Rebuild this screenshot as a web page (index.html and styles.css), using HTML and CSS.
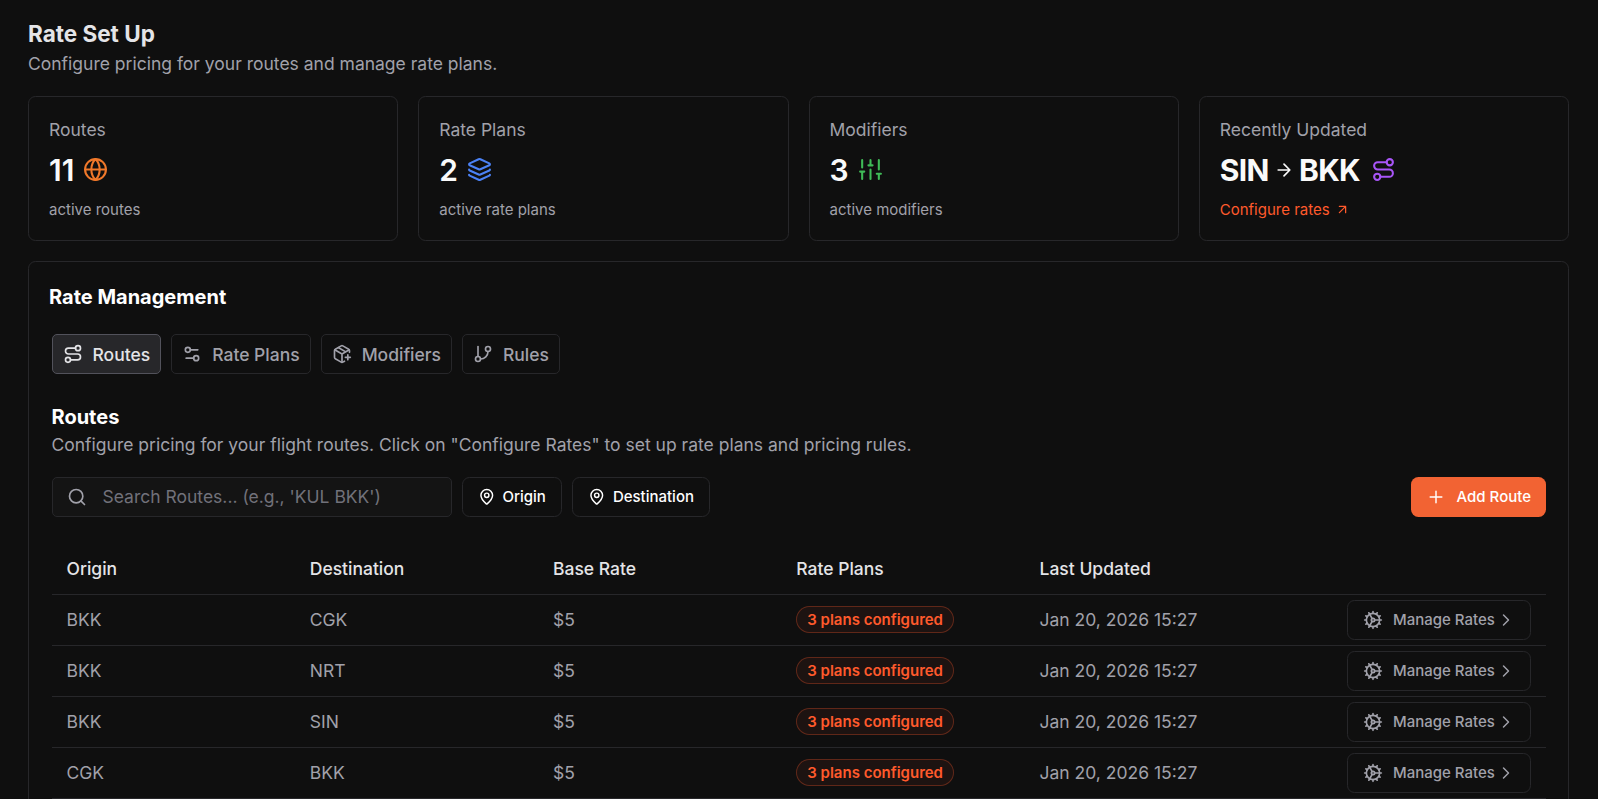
FILE: index.html
```html
<!doctype html>
<html lang="en">
<head>
	<meta charset="utf-8" />
	<title>Rate Set Up</title>
	<link rel="stylesheet" href="styles.css">
</head>
<body>
	<!-- shared icons -->
	<svg class="sprite" aria-hidden="true">
		<symbol id="i-route" viewBox="0 0 24 24"><circle cx="6" cy="19" r="3"/><path d="M9 19h8.5a3.5 3.5 0 0 0 0-7h-11a3.5 3.5 0 0 1 0-7H15"/><circle cx="18" cy="5" r="3"/></symbol>
		<symbol id="i-pin" viewBox="0 0 24 24"><path d="M20 10c0 4.993-5.539 10.193-7.399 11.799a1 1 0 0 1-1.202 0C9.539 20.193 4 14.993 4 10a8 8 0 0 1 16 0"/><circle cx="12" cy="10" r="3"/></symbol>
		<symbol id="i-cog" viewBox="0 0 24 24"><path d="M12 20a8 8 0 1 0 0-16 8 8 0 0 0 0 16Z"/><path d="M12 14a2 2 0 1 0 0-4 2 2 0 0 0 0 4Z"/><path d="M12 2v2M12 22v-2M17 20.66l-1-1.73M11 10.27 7 3.34M20.66 17l-1.73-1M3.34 7l1.73 1M14 12h8M2 12h2M20.66 7l-1.73 1M3.34 17l1.73-1M17 3.34l-1 1.73M11 13.73l-4 6.93"/></symbol>
		<symbol id="i-chevron" viewBox="0 0 24 24"><path d="m9 18 6-6-6-6"/></symbol>
	</svg>

	<main class="page">
		<h1>Rate Set Up</h1>
		<p class="lead">Configure pricing for your routes and manage rate plans.</p>

		<section class="stats">
			<div class="stat">
				<div class="stat-label">Routes</div>
				<div class="stat-value">11
					<svg class="icon orange" viewBox="0 0 24 24"><circle cx="12" cy="12" r="10"/><path d="M12 2a14.5 14.5 0 0 0 0 20 14.5 14.5 0 0 0 0-20M2 12h20"/></svg>
				</div>
				<div class="stat-note">active routes</div>
			</div>
			<div class="stat">
				<div class="stat-label">Rate Plans</div>
				<div class="stat-value">2
					<svg class="icon blue" viewBox="0 0 24 24"><path d="M12.83 2.18a2 2 0 0 0-1.66 0L2.6 6.08a1 1 0 0 0 0 1.83l8.58 3.91a2 2 0 0 0 1.66 0l8.58-3.9a1 1 0 0 0 0-1.83z"/><path d="M2 12a1 1 0 0 0 .58.91l8.6 3.91a2 2 0 0 0 1.65 0l8.58-3.9A1 1 0 0 0 22 12"/><path d="M2 17a1 1 0 0 0 .58.91l8.6 3.91a2 2 0 0 0 1.65 0l8.58-3.9A1 1 0 0 0 22 17"/></svg>
				</div>
				<div class="stat-note">active rate plans</div>
			</div>
			<div class="stat">
				<div class="stat-label">Modifiers</div>
				<div class="stat-value">3
					<svg class="icon green" viewBox="0 0 24 24"><path d="M4 21v-7M4 10V3M12 21v-9M12 8V3M20 21v-5M20 12V3M2 14h4M10 8h4M18 16h4"/></svg>
				</div>
				<div class="stat-note">active modifiers</div>
			</div>
			<div class="stat">
				<div class="stat-label">Recently Updated</div>
				<div class="stat-value pair">
					<span>SIN</span>
					<svg class="icon arrow" viewBox="0 0 24 24"><path d="M5 12h14M12 5l7 7-7 7"/></svg>
					<span>BKK</span>
					<svg class="icon purple" viewBox="0 0 24 24"><use href="#i-route"/></svg>
				</div>
				<a class="stat-note link">Configure rates
					<svg class="icon" viewBox="0 0 24 24"><path d="M7 7h10v10M7 17 17 7"/></svg>
				</a>
			</div>
		</section>

		<section class="panel">
			<h2>Rate Management</h2>
			<div class="panel-body">
				<nav class="tabs">
					<a class="tab active"><svg class="icon"><use href="#i-route"/></svg>Routes</a>
					<a class="tab"><svg class="icon" viewBox="0 0 24 24"><path d="M14 17H5M19 7h-9"/><circle cx="17" cy="17" r="3"/><circle cx="7" cy="7" r="3"/></svg>Rate Plans</a>
					<a class="tab"><svg class="icon" viewBox="0 0 24 24"><path d="M16 16h6M19 13v6"/><path d="M21 10V8a2 2 0 0 0-1-1.73l-7-4a2 2 0 0 0-2 0l-7 4A2 2 0 0 0 3 8v8a2 2 0 0 0 1 1.73l7 4a2 2 0 0 0 2 0l2-1.14"/><path d="m7.5 4.27 9 5.15M3.29 7 12 12l8.71-5M12 22V12"/></svg>Modifiers</a>
					<a class="tab"><svg class="icon" viewBox="0 0 24 24"><path d="M6 3v12"/><circle cx="18" cy="6" r="3"/><circle cx="6" cy="18" r="3"/><path d="M18 9a9 9 0 0 1-9 9"/></svg>Rules</a>
				</nav>

				<h3>Routes</h3>
				<p class="lead">Configure pricing for your flight routes. Click on "Configure Rates" to set up rate plans and pricing rules.</p>

				<div class="toolbar">
					<label class="search">
						<svg class="icon" viewBox="0 0 24 24"><path d="m21 21-4.34-4.34"/><circle cx="11" cy="11" r="8"/></svg>
						<input type="text" placeholder="Search Routes... (e.g., 'KUL BKK')" />
					</label>
					<button class="btn"><svg class="icon"><use href="#i-pin"/></svg>Origin</button>
					<button class="btn"><svg class="icon"><use href="#i-pin"/></svg>Destination</button>
					<button class="btn primary"><svg class="icon" viewBox="0 0 24 24"><path d="M5 12h14M12 5v14"/></svg>Add Route</button>
				</div>

				<table id="routes-table">
					<thead>
						<tr>
							<th>Origin</th>
							<th>Destination</th>
							<th>Base Rate</th>
							<th>Rate Plans</th>
							<th>Last Updated</th>
							<th class="actions"></th>
						</tr>
					</thead>
					<tbody>
						<tr>
							<td>BKK</td>
							<td>CGK</td>
							<td>$5</td>
							<td><span class="badge">3 plans configured</span></td>
							<td>Jan 20, 2026 15:27</td>
							<td class="actions"><button class="btn manage"><svg class="icon"><use href="#i-cog"/></svg>Manage Rates<svg class="icon chevron"><use href="#i-chevron"/></svg></button></td>
						</tr>
						<tr>
							<td>BKK</td>
							<td>NRT</td>
							<td>$5</td>
							<td><span class="badge">3 plans configured</span></td>
							<td>Jan 20, 2026 15:27</td>
							<td class="actions"><button class="btn manage"><svg class="icon"><use href="#i-cog"/></svg>Manage Rates<svg class="icon chevron"><use href="#i-chevron"/></svg></button></td>
						</tr>
						<tr>
							<td>BKK</td>
							<td>SIN</td>
							<td>$5</td>
							<td><span class="badge">3 plans configured</span></td>
							<td>Jan 20, 2026 15:27</td>
							<td class="actions"><button class="btn manage"><svg class="icon"><use href="#i-cog"/></svg>Manage Rates<svg class="icon chevron"><use href="#i-chevron"/></svg></button></td>
						</tr>
						<tr>
							<td>CGK</td>
							<td>BKK</td>
							<td>$5</td>
							<td><span class="badge">3 plans configured</span></td>
							<td>Jan 20, 2026 15:27</td>
							<td class="actions"><button class="btn manage"><svg class="icon"><use href="#i-cog"/></svg>Manage Rates<svg class="icon chevron"><use href="#i-chevron"/></svg></button></td>
						</tr>
					</tbody>
				</table>
			</div>
		</section>
	</main>
</body>
</html>
```
FILE: styles.css
```css
* { box-sizing: border-box; }
html { background: #0f0f0f; }
body { margin: 0; height: 799px; overflow: hidden; font: 17.5px/25px Inter, sans-serif; color: #a1a1aa; background: #0f0f0f; }
h1, h2, h3, p { margin: 0; }
button, input { font-family: inherit; }

.sprite { display: none; }
.icon { width: 20px; height: 20px; flex: none; fill: none; stroke: currentColor; stroke-width: 2; stroke-linecap: round; stroke-linejoin: round; }

.page { padding: 19px 29px 0 28px; }
h1 { font-size: 22.5px; line-height: 30px; font-weight: 700; color: #e4e4e7; }
.lead { line-height: 25px; padding-top: 2px; }

/* summary cards */
.stats { display: grid; grid-template-columns: repeat(4, 1fr); gap: 20px; margin-top: 20px; }
.stat { height: 145px; padding: 20px; border: 1px solid #27272a; border-radius: 7.5px; }
.stat-label { line-height: 25px; }
.stat-value { display: flex; align-items: center; gap: 9px; height: 37.5px; margin-top: 9px; font-size: 30px; line-height: 38px; padding-top: 1px; font-weight: 600; color: #fafafa; }
.stat-value .icon { width: 25px; height: 25px; margin-top: -1px; }
.stat-value .arrow { width: 20px; height: 20px; }
.stat-value.pair { gap: 5px; font-weight: 700; letter-spacing: -0.6px; }
.stat-value .purple { margin-left: 6px; }
.stat-note { display: flex; align-items: center; margin-top: 11px; font-size: 15px; line-height: 20px; }
.link { color: #ff5a2c; gap: 5px; }
.link .icon { width: 15px; height: 15px; }
.stat-value .orange { color: #f0782a; }
.stat-value .blue { color: #4b82f6; }
.stat-value .green { color: #3fbb57; }
.stat-value .purple { color: #a855f7; }

/* rate management */
.panel { margin-top: 20px; height: 700px; padding: 20px; border: 1px solid #27272a; border-radius: 7.5px; }
h2, h3 { font-size: 20px; line-height: 30px; font-weight: 700; color: #fff; }
.panel-body { padding: 22px 2px 0 2.5px; }
.tabs { display: flex; gap: 10px; }
.tab { display: flex; align-items: center; gap: 10px; height: 40px; padding: 0 10px; border: 1px solid #27272a; border-radius: 5px; font-weight: 500; }
.tab.active { color: #e4e4e7; background: #27272a; border-color: #52525b; }
h3 { margin-top: 28px; line-height: 30px; }
h3 + .lead { padding: 0; }

.toolbar { display: flex; gap: 10px; margin-top: 20px; }
.search { display: flex; align-items: center; width: 400px; height: 40px; padding: 0 14px; gap: 16px; border: 1px solid #27272a; border-radius: 5px; background: #141414; }
.search input { flex: 1; min-width: 0; padding: 0 0 2px; border: 0; outline: 0; background: none; font-size: 17.5px; color: #a1a1aa; }
.search input::placeholder { color: #71717a; }
.btn { display: flex; align-items: center; height: 40px; padding: 0 15px; gap: 7.5px; border: 1px solid #27272a; border-radius: 7.5px; background: none; font-size: 15px; font-weight: 500; white-space: nowrap; color: #fff; }
.btn .icon { width: 17.5px; height: 17.5px; }
.toolbar .btn { padding-bottom: 1px; }
.btn.primary { margin-left: auto; gap: 11px; border: 0; background: #f26333; }
.btn.primary .icon, .btn.manage .icon { width: 20px; height: 20px; }

#routes-table { width: 100%; margin-top: 26px; border-collapse: collapse; table-layout: fixed; }
#routes-table th { height: 51px; padding: 0 15px; width: 243.25px; text-align: left; font-weight: 500; color: #e4e4e7; }
#routes-table td { height: 51px; padding: 0 15px; }
#routes-table tr { border-bottom: 1px solid #27272a; }
#routes-table .actions { width: auto; }
.badge { display: inline-block; height: 27px; padding: 0 10px; border: 1px solid rgba(255, 90, 44, .3); border-radius: 14px; background: rgba(255, 90, 44, .06); font-size: 15px; line-height: 25px; font-weight: 600; color: #ff5a2c; vertical-align: middle; }
.btn.manage { margin-left: auto; width: 184px; gap: 10px; color: #a1a1aa; }
.btn.manage .chevron { margin-left: -9px; }
.btn.primary .icon, .chevron { stroke-width: 1.75; }
```
